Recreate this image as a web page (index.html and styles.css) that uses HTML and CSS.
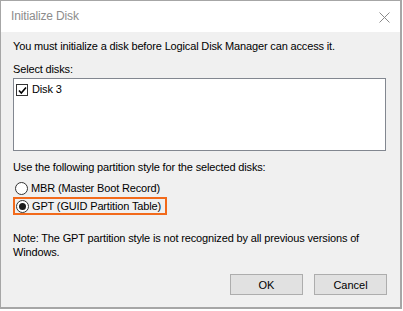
FILE: index.html
```html
<!DOCTYPE html>
<html lang="en">
<head>
    <meta charset="UTF-8">
    <title>Initialize Disk</title>
    <link rel="stylesheet" href="styles.css">
</head>
<body>
    <div class="window">
        <div class="title-bar">
            <span class="title">Initialize Disk</span>
            <svg class="close" width="11" height="11" viewBox="0 0 11 11">
                <path d="M0.5 0.5 L10.5 10.5 M10.5 0.5 L0.5 10.5" stroke="#8a8a8a" stroke-width="1" fill="none"/>
            </svg>
        </div>
        <div class="content">
            <p class="intro">You must initialize a disk before Logical Disk Manager can access it.</p>
            <p class="label">Select disks:</p>
            <div class="disk-list">
                <div class="disk-item">
                    <span class="checkbox">
                        <svg width="9" height="9" viewBox="0 0 9 9">
                            <path d="M1 4.5 L3.3 7 L8 1.5" stroke="#000" stroke-width="1.6" fill="none"/>
                        </svg>
                    </span>
                    <span>Disk 3</span>
                </div>
            </div>
            <p class="label style-label">Use the following partition style for the selected disks:</p>
            <div class="option">
                <span class="radio"></span>
                <span>MBR (Master Boot Record)</span>
            </div>
            <div class="option selected">
                <span class="radio checked"></span>
                <span>GPT (GUID Partition Table)</span>
            </div>
            <p class="note">Note: The GPT partition style is not recognized by all previous versions of Windows.</p>
            <div class="buttons">
                <button class="btn">OK</button>
                <button class="btn">Cancel</button>
            </div>
        </div>
    </div>
</body>
</html>
```

FILE: styles.css
```css
* {
    box-sizing: border-box;
    margin: 0;
    padding: 0;
}
body {
    font-family: 'Liberation Sans', Arial, sans-serif;
    font-size: 11px;
    line-height: 13px;
    letter-spacing: -0.15px;
    color: #000;
    background-color: #fff;
    width: 403px;
    height: 311px;
}
.window {
    width: 402px;
    height: 309px;
    border: 1px solid #a6a6a6;
    border-right-width: 2px;
    border-bottom-width: 2px;
    display: flex;
    flex-direction: column;
    background-color: #f0f0f0;
}
.title-bar {
    height: 31px;
    background-color: #fff;
    display: flex;
    align-items: center;
    justify-content: space-between;
    padding: 0 10px 0 10px;
}
.title {
    font-size: 12px;
    color: #8c8c8c;
}
.close {
    margin-top: 1px;
}
.content {
    flex-grow: 1;
    padding: 8px 14px 0 12px;
    display: flex;
    flex-direction: column;
}
.label {
    margin-top: 10px;
}
.disk-list {
    margin-top: 2px;
    height: 73px;
    background-color: #fff;
    border: 1px solid #828790;
    padding: 3px 2px;
}
.disk-item {
    display: flex;
    align-items: center;
    gap: 4px;
}
.checkbox {
    width: 12px;
    height: 12px;
    margin-top: 2px;
    border: 1px solid #333;
    background-color: #fff;
    display: flex;
    align-items: center;
    justify-content: center;
}
.style-label {
    margin-top: 10px;
}
.option {
    display: flex;
    align-items: center;
    gap: 3px;
    margin-top: 7px;
    padding-left: 2px;
    height: 14px;
}
.option.selected {
    margin-top: 2px;
    height: 18px;
    width: 154px;
    padding-left: 1px;
    border: 2px solid #f26a1b;
}
.radio {
    width: 13px;
    height: 13px;
    border: 1px solid #333;
    border-radius: 50%;
    background-color: #fff;
    display: flex;
    align-items: center;
    justify-content: center;
}
.radio.checked::after {
    content: "";
    width: 7px;
    height: 7px;
    border-radius: 50%;
    background-color: #1a1a1a;
}
.note {
    margin-top: 16px;
    line-height: 14px;
    padding-right: 10px;
}
.buttons {
    display: flex;
    justify-content: flex-end;
    gap: 11px;
    margin-top: 15px;
    margin-right: -1px;
}
.btn {
    width: 73px;
    height: 21px;
    background-color: #e1e1e1;
    border: 1px solid #adadad;
    font-family: 'Liberation Sans', Arial, sans-serif;
    font-size: 11px;
    color: #000;
}
```
